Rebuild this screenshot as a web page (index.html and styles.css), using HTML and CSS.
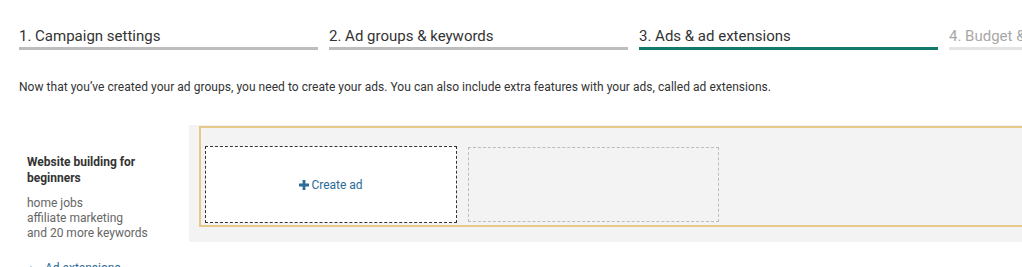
FILE: index.html
```html
<!DOCTYPE html>
<html>
<head>
<meta charset="utf-8">
<link rel="stylesheet" href="styles.css">
</head>
<body>
<div class="page">
  <div class="steps">
    <div class="step done"><span class="step-label">1. Campaign settings</span><div class="step-bar"></div></div>
    <div class="step done"><span class="step-label">2. Ad groups &amp; keywords</span><div class="step-bar"></div></div>
    <div class="step active"><span class="step-label">3. Ads &amp; ad extensions</span><div class="step-bar"></div></div>
    <div class="step todo"><span class="step-label">4. Budget &amp; review</span><div class="step-bar"></div></div>
  </div>
  <p class="intro">Now that you’ve created your ad groups, you need to create your ads. You can also include extra features with your ads, called ad extensions.</p>
  <div class="group-row">
    <div class="group-info">
      <div class="group-name">Website building for beginners</div>
      <div class="group-keywords">home jobs<br>affiliate marketing<br>and 20 more keywords</div>
    </div>
    <div class="ads-panel">
      <div class="ads-frame">
        <div class="ad-slot create">
          <svg class="plus" width="10" height="10" viewBox="0 0 10 10"><path d="M3.6 0h2.8v3.6H10v2.8H6.4V10H3.6V6.4H0V3.6h3.6z" fill="#2c6a97"/></svg><span class="create-text">Create ad</span>
        </div>
        <div class="ad-slot empty"></div>
      </div>
    </div>
  </div>
  <div class="ext-link">
    <svg class="caret" width="6" height="5" viewBox="0 0 6 5"><path d="M3 0L6 5H0z" fill="#2c6a97"/></svg><span>Ad extensions</span>
  </div>
</div>
</body>
</html>
```
FILE: styles.css
```css
html, body {
  margin: 0;
  padding: 0;
  overflow: hidden;
  background: #fff;
}
.page {
  width: 1300px;
  font-family: Roboto, "Liberation Sans", Arial, sans-serif;
  color: #333;
}
.steps {
  display: flex;
  gap: 11px;
  padding: 27px 0 0 19px;
}
.step {
  width: 299px;
  display: flex;
  flex-direction: column;
}
.step-label {
  font-size: 15px;
  line-height: 18px;
  color: #333;
  white-space: nowrap;
}
.step-bar {
  margin-top: 2px;
  height: 3px;
  background: #bdbdbd;
}
.step.active .step-bar {
  background: #137a6b;
}
.step.todo .step-label {
  color: #a8a8a8;
}
.step.todo .step-bar {
  background: #e4e4e4;
}
.intro {
  margin: 29px 0 0 19px;
  font-size: 12px;
  line-height: 16px;
  letter-spacing: 0.04px;
  color: #333;
}
.group-row {
  display: flex;
  margin-top: 30px;
  padding-left: 19px;
}
.group-info {
  width: 162px;
  padding: 29px 0 0 8px;
}
.group-name {
  font-size: 12px;
  font-weight: bold;
  line-height: 16px;
  color: #333;
  width: 120px;
}
.group-keywords {
  margin-top: 10px;
  font-size: 12px;
  line-height: 15px;
  color: #666;
}
.ads-panel {
  flex: 1;
  background: #f3f3f3;
  height: 117px;
  box-sizing: border-box;
  padding: 1px 0 0 10px;
}
.ads-frame {
  display: flex;
  align-items: flex-start;
  gap: 11px;
  border: 2px solid #e6c889;
  padding: 18px 4px 2px 4px;
  box-sizing: border-box;
  height: 101px;
}
.ad-slot {
  box-sizing: border-box;
}
.ad-slot.create {
  width: 252px;
  height: 77px;
  background: #fff;
  border: 1px dashed #333;
  display: flex;
  align-items: center;
  justify-content: center;
  padding-top: 0;
}
.plus {
  margin-right: 2px;
}
.create-text {
  font-size: 12px;
  line-height: 16px;
  color: #2c6a97;
}
.ad-slot.empty {
  width: 251px;
  height: 75px;
  margin-top: 1px;
  border: 1px dashed #bcbcbc;
}
.ext-link {
  display: flex;
  align-items: center;
  gap: 11px;
  margin: 18px 0 0 28px;
  font-size: 12px;
  line-height: 16px;
  color: #2c6a97;
}
```
